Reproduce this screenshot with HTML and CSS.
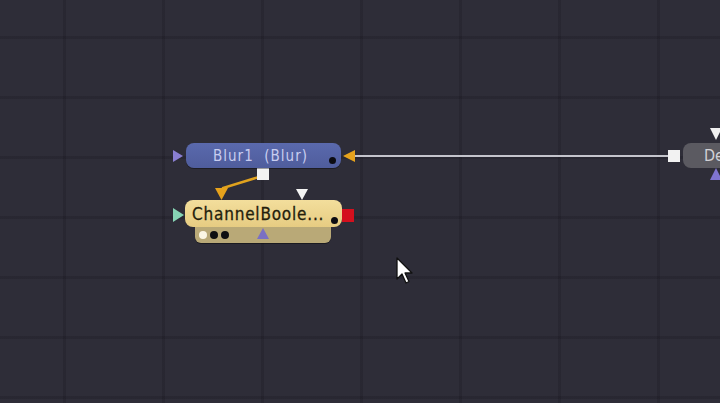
FILE: index.html
```html
<!DOCTYPE html>
<html>
<head>
<meta charset="utf-8">
<link rel="stylesheet" href="styles.css">
</head>
<body>
<div class="canvas">
  <svg class="wires" width="720" height="403" viewBox="0 0 720 403">
    <line x1="354" y1="156" x2="670" y2="156" stroke="#c4c4cc" stroke-width="2"/>
    <polyline points="259,177 223,188 221,194" fill="none" stroke="#e0a21e" stroke-width="2.5"/>
    <polygon points="173,150 173,162 183,156" fill="#8a7fd2"/>
    <polygon points="343,156 355,150 355,162" fill="#e6a21c"/>
    <rect x="257" y="168" width="12" height="12" fill="#f2f2f2"/>
    <polygon points="215,188 228,188 221.5,200" fill="#e6a21c"/>
    <polygon points="296,189 308,189 302,200" fill="#f4f4f4"/>
    <polygon points="173,208 173,222 184,215" fill="#86d4b4"/>
    <rect x="342" y="209" width="12" height="13" fill="#d4101e"/>
    <rect x="668" y="150" width="12" height="12" fill="#f2f2f2"/>
    <polygon points="710,128 722,128 716,140" fill="#f0f0f0"/>
    <polygon points="716,168 710,180 722,180" fill="#7f74d0"/>
  </svg>

  <div class="node node-blur">
    <span class="label">Blur1&nbsp; (Blur)</span>
    <span class="dot"></span>
  </div>

  <div class="node-group node-cb">
    <div class="node node-yellow">
      <span class="label">ChannelBoole...</span>
      <span class="dot"></span>
    </div>
    <div class="tray">
      <span class="pip pip-white"></span>
      <span class="pip"></span>
      <span class="pip"></span>
      <svg class="tray-tri" width="12" height="11" viewBox="0 0 12 11"><polygon points="6,0 12,11 0,11" fill="#7a70c4"/></svg>
    </div>
  </div>

  <div class="node node-gray">
    <span class="label">De</span>
  </div>

  <svg class="cursor" width="20" height="30" viewBox="0 0 20 30">
    <path d="M1 1 L1 22 L6 17 L10 26 L13 24.5 L9 16 L16 16 Z" fill="#ffffff" stroke="#111" stroke-width="1.3" stroke-linejoin="round"/>
  </svg>
</div>
</body>
</html>
```

FILE: styles.css
```css
html, body {
  margin: 0;
  padding: 0;
  background: #2e2d38;
}

.canvas {
  position: relative;
  width: 720px;
  height: 403px;
  overflow: hidden;
  background-color: #2e2d38;
  background-image:
    linear-gradient(to right, rgba(20, 19, 26, 0.22) 0, rgba(20, 19, 26, 0.22) 3px, transparent 3px),
    linear-gradient(to bottom, rgba(20, 19, 26, 0.22) 0, rgba(20, 19, 26, 0.22) 3px, transparent 3px);
  background-size: 99px 60px, 99px 60px;
  background-position: 63px 36px, 63px 36px;
  font-family: "DejaVu Sans Condensed", "DejaVu Sans", sans-serif;
  font-stretch: condensed;
}

.wires {
  position: absolute;
  left: 0;
  top: 0;
}

.node {
  display: flex;
  align-items: center;
  position: relative;
  box-sizing: border-box;
}

.node .dot {
  position: absolute;
  right: 5px;
  bottom: 4px;
  width: 7px;
  height: 7px;
  border-radius: 50%;
  background: #0c0c12;
}

.node-blur {
  position: absolute;
  left: 186px;
  top: 143px;
  width: 155px;
  height: 25px;
  border-radius: 8px;
  background: linear-gradient(#5a69ad, #4f5d9c);
  box-shadow: 0 1px 0 rgba(0, 0, 0, 0.35);
  justify-content: center;
}

.node-blur .label {
  color: #c8cdf0;
  font-size: 15px;
  letter-spacing: 1px;
  margin-left: -6px;
}

.node-group {
  position: absolute;
  display: flex;
  flex-direction: column;
  align-items: flex-start;
}

.node-cb {
  left: 185px;
  top: 200px;
}

.node-yellow {
  width: 157px;
  height: 27px;
  border-radius: 8px;
  background: linear-gradient(#f3de9c, #e6cc82);
  padding-left: 7px;
  z-index: 1;
}

.node-yellow .label {
  color: #241e0c;
  font-size: 17px;
  letter-spacing: 0.8px;
  -webkit-text-stroke: 0.3px #241e0c;
}

.node-yellow .dot {
  bottom: 3px;
  right: 4px;
}

.tray {
  margin-left: 10px;
  width: 136px;
  height: 16px;
  box-sizing: border-box;
  background: #b9a977;
  border-radius: 0 0 6px 6px;
  display: flex;
  align-items: center;
  gap: 3px;
  padding-left: 4px;
  box-shadow: 0 1px 0 rgba(0, 0, 0, 0.4);
}

.pip {
  width: 8px;
  height: 8px;
  border-radius: 50%;
  background: #0e0e12;
}

.pip-white {
  background: #fbf6e4;
}

.tray-tri {
  margin-left: 25px;
  margin-top: -4px;
}

.node-gray {
  position: absolute;
  left: 683px;
  top: 143px;
  width: 70px;
  height: 25px;
  border-radius: 8px;
  background: #5b5a61;
  padding-left: 21px;
}

.node-gray .label {
  color: #d2d2d6;
  font-size: 16px;
}

.cursor {
  position: absolute;
  left: 396px;
  top: 257px;
}
```
